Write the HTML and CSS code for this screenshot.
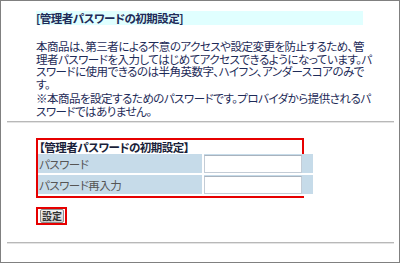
FILE: index.html
```html
<!DOCTYPE html>
<html lang="ja">
<head>
    <meta charset="UTF-8">
    <title>管理者パスワードの初期設定</title>
    <link rel="stylesheet" href="styles.css">
</head>
<body>
    <div class="frame">
        <div class="content">
            <div class="title">[管理者パスワードの初期設定]</div>
            <p class="note">本商品は、第三者による不意のアクセスや設定変更を防止するため、管理者パスワードを入力してはじめてアクセスできるようになっています。パスワードに使用できるのは半角英数字、ハイフン、アンダースコアのみです。</p>
            <p class="note second">※本商品を設定するためのパスワードです。プロバイダから提供されるパスワードではありません。</p>
        </div>
        <hr class="line">
        <div class="content">
            <div class="mark formMark">
                <table class="form">
                    <tr>
                        <th colspan="2">【管理者パスワードの初期設定】</th>
                    </tr>
                    <tr>
                        <td class="label">パスワード</td>
                        <td class="field"><input type="password" class="pw"></td>
                    </tr>
                    <tr>
                        <td class="label">パスワード再入力</td>
                        <td class="field"><input type="password" class="pw"></td>
                    </tr>
                </table>
            </div>
            <div class="mark btnMark">
                <button class="setBtn">設定</button>
            </div>
        </div>
        <hr class="line bottom">
    </div>
</body>
</html>
```

FILE: styles.css
```css
body {
    margin: 0;
    font-family: "Noto Sans CJK JP", "Noto Sans", sans-serif;
    font-size: 11.5px;
    letter-spacing: -0.5px;
    font-feature-settings: "palt";
    color: #1e2b58;
    background-color: #fff;
}
.frame {
    box-sizing: border-box;
    width: 400px;
    height: 263px;
    border: 1px solid #808080;
    padding: 10px 5px 0 6px;
}
.content {
    margin-left: 29px;
}
.title {
    width: 327px;
    height: 14px;
    line-height: 14px;
    background-color: #e0ffff;
    font-weight: bold;
}
.note {
    width: 336px;
    margin: 15px 0 0 0;
    line-height: 12.5px;
}
.note.second {
    margin-top: 2px;
}
.line {
    margin: 4px 0 0 0;
    height: 0;
    border: none;
    border-top: 1px solid #b8b8b8;
    border-bottom: 1px solid #e4e4e4;
}
.line.bottom {
    margin-top: 17px;
}
.mark {
    border: 2px solid #e60000;
}
.formMark {
    width: 264px;
    margin-top: 15px;
}
.form {
    width: 275px;
    border-collapse: collapse;
    font-size: 11.5px;
}
.form th {
    height: 14px;
    padding: 0 0 0 1px;
    line-height: 14px;
    text-align: left;
    font-weight: bold;
    color: #1a1f3a;
}
.form td {
    height: 19px;
    padding: 0;
    background-color: #c6dbe9;
    border-bottom: 2px solid #fff;
}
.form .label {
    width: 163px;
    padding-left: 1px;
    border-right: 2px solid #fff;
    color: #555;
}
.form .field {
    vertical-align: top;
}
.pw {
    box-sizing: border-box;
    display: block;
    width: 98px;
    height: 18px;
    margin: 1px 0 0 0;
    padding: 0 2px;
    border: 1px solid #c3ccd6;
    border-top-color: #a9b3be;
    background-color: #fff;
}
.btnMark {
    display: inline-block;
    margin-top: 9px;
    padding: 0 1px 0 2px;
}
.setBtn {
    display: block;
    width: 24px;
    height: 14px;
    margin: 0;
    padding: 0;
    font-family: "Noto Sans CJK JP", sans-serif;
    font-size: 10px;
    font-weight: bold;
    letter-spacing: 0;
    line-height: 12px;
    color: #333;
    background: linear-gradient(#f2f2f2, #d4d4d4);
    border: 1px solid #8e8e8e;
    border-radius: 2px;
}
```
